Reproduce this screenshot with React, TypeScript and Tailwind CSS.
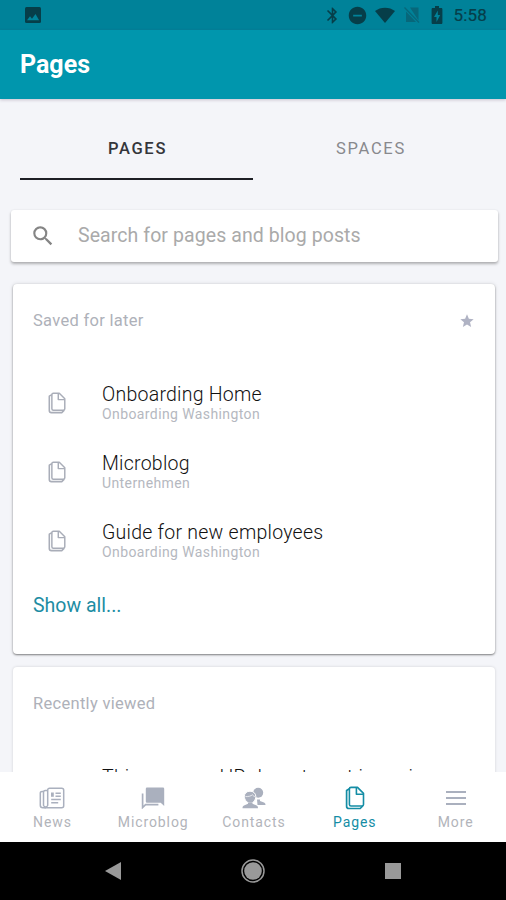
import React from 'react';
import { MdBluetooth, MdRemoveCircle, MdSearch, MdStar } from 'react-icons/md';

type SavedPage = { title: string; space: string };

const savedPages: SavedPage[] = [
  { title: 'Onboarding Home', space: 'Onboarding Washington' },
  { title: 'Microblog', space: 'Unternehmen' },
  { title: 'Guide for new employees', space: 'Onboarding Washington' },
];

const PagesIcon: React.FC<{ className?: string }> = ({ className }) => (
  <svg viewBox="0 0 20 24" className={className} fill="none" stroke="currentColor" strokeLinejoin="round">
    <path d="M6 1.4h6.5l6 6v11a1.6 1.6 0 0 1-1.6 1.6H6a1.6 1.6 0 0 1-1.6-1.6V3a1.6 1.6 0 0 1 1.6-1.6z" strokeWidth="1.6" />
    <path d="M11.4 2v6.3h6.8" strokeWidth="1.6" />
    <path d="M4.4 2.8 1.6 4.5v15.7a2.3 2.3 0 0 0 2.3 2.3h11.3l2.5-2.5" strokeWidth="1.7" />
  </svg>
);

const NewsIcon = () => (
  <svg viewBox="0 0 26 22" className="h-[22px] w-[26px]" fill="none" stroke="currentColor" strokeWidth="1.5">
    <path d="M10.5 1.2h12.2a2 2 0 0 1 2 2v15.6a2 2 0 0 1-2 2H5.5M10.5 1.2a1.8 1.8 0 0 0-1.8 1.8v15.4a2.2 2.2 0 0 1-4.2 0V5.2a1.8 1.8 0 0 1 1.8-1.8h2.4" />
    <path d="M4.5 4.4H3a1.7 1.7 0 0 0-1.7 1.7v12.2a2.5 2.5 0 0 0 2.5 2.5h3" />
    <path d="M16.5 6.2h5.3M16.5 9.2h5.3M12.2 12.4h9.6M12.2 15.8h7" />
    <path d="M12 5.5h2.8v4.3H12z" fill="currentColor" stroke="none" />
  </svg>
);

const MicroblogIcon = () => (
  <svg viewBox="0 0 24 22" className="h-[22px] w-6" fill="currentColor">
    <path d="M6 .5h16a1.2 1.2 0 0 1 1.2 1.2V19l-3.5-3.3H6a1.2 1.2 0 0 1-1.2-1.2V1.7A1.2 1.2 0 0 1 6 .5z" />
    <path d="M1.6 6.5v14l3-2.8h12.8" fill="none" stroke="currentColor" strokeWidth="1.7" />
  </svg>
);

const ContactsIcon = () => (
  <svg viewBox="0 0 24 22" className="h-[22px] w-6" fill="currentColor">
    <circle cx="16.2" cy="5.8" r="5" />
    <path d="M15 12.4h3v1.7l4 1.5c1.1.5 1.5 1.2 1.5 2.3h-8z" />
    <path d="M8 4.2c3.5 0 5.8 2.2 5.8 5.2 0 3.6-2.4 6.7-5.6 6.7S2.4 13 2.4 9.4C2.4 6.4 4.6 4.2 8 4.2z" stroke="#fff" />
    <path d="M3.4 9.6c3.2.1 5.4-.5 7-1.8.8 1 1.6 1.5 2.5 1.8" fill="none" stroke="#fff" strokeWidth=".7" />
    <path d="M6 15.5h4.5v1.2l4.1 1.7c1.1.5 1.4 1.3 1.4 2.8H.5c0-1.5.4-2.3 1.5-2.8L6 16.7z" />
  </svg>
);

const MenuIcon = () => (
  <svg viewBox="0 0 22 22" className="size-[22px]" stroke="currentColor" strokeWidth="2">
    <path d="M1 5h20M1 11h20M1 17h20" />
  </svg>
);

const StatusBar = () => (
  <div className="flex h-[30px] shrink-0 items-center justify-between bg-[#008299] pl-[25px] pr-[19px] text-[#063e49]">
    <svg viewBox="0 0 16 16" className="size-4">
      <rect width="16" height="16" rx="1.5" fill="currentColor" />
      <path d="M2 13.2 5 9.3l2 2.4L10.5 7l3.6 6.2z" fill="#008299" />
    </svg>
    <div className="flex items-center">
      <MdBluetooth className="mr-[5px] size-[19px]" />
      <MdRemoveCircle className="mr-[6px] size-[21px]" />
      <svg viewBox="0 0 22 18" className="mr-[8px] h-[18px] w-[22px]" fill="currentColor">
        <path d="M11 17 1 5C6.5.5 15.5.5 21 5z" />
      </svg>
      <svg viewBox="0 0 16 18" className="mr-[11px] h-[18px] w-4">
        <path d="M6 1.5h8.500v13zM2 5.500 12 16H2z" fill="#07677a" />
        <path d="M.5 1.5 15 16.5" stroke="#07677a" strokeWidth="1.3" />
      </svg>
      <svg viewBox="0 0 12 18" className="mr-[10px] h-[18px] w-3">
        <path d="M4 0h4v2h2.2c.7 0 1.2.5 1.2 1.2v13.5c0 .7-.5 1.3-1.2 1.3H1.8C1.1 18 .6 17.4.6 16.7V3.200C.6 2.500 1.100 2 1.800 2H4z" fill="currentColor" />
        <path d="M6.8 4.5 3 11h2.500v5L9.200 9H6.800z" fill="#008299" />
      </svg>
      <span className="text-[17px] leading-none tracking-[0.2px] [-webkit-text-stroke:0.2px]">5:58</span>
    </div>
  </div>
);

const PageRow: React.FC<{ page: SavedPage }> = ({ page }) => (
  <div className="flex h-[69px] items-start pl-[34px]">
    <PagesIcon className="mt-[9px] h-[22px] w-[20px] text-[#a9adb8]" />
    <div className="ml-[35px]">
      <h3 className="whitespace-nowrap text-[19.5px] font-light leading-[23px] tracking-[0.25px] text-[#111]">{page.title}</h3>
      <p className="text-[14px] leading-4 tracking-[0.4px] text-[#b5b8c0]">{page.space}</p>
    </div>
  </div>
);

const NavItem: React.FC<{ label: string; active?: boolean; children: React.ReactNode }> = ({ label, active, children }) => (
  <button className={active ? 'flex w-[101px] flex-col items-center text-[#148da5]' : 'flex w-[101px] flex-col items-center text-[#aab0be]'}>
    <span className="flex h-6 items-center">{children}</span>
    <span className={active ? 'mt-0.5 text-[14px] leading-5 tracking-[0.9px]' : 'mt-0.5 text-[14px] leading-5 tracking-[0.9px] text-[#b2b4ba]'}>{label}</span>
  </button>
);

const App: React.FC = () => {
  return (
    <div className="flex h-[900px] w-[506px] flex-col overflow-hidden bg-[#f4f5f9] font-['Roboto',sans-serif]">
      <StatusBar />
      <header className="flex h-[69px] shrink-0 items-center bg-[#0096ad] pl-5 shadow-[0_1px_3px_rgba(70,40,80,0.25)]">
        <h1 className="text-[25px] font-bold leading-none text-white">Pages</h1>
      </header>

      <main className="min-h-0 flex-1 overflow-hidden">
        <div className="mx-5 mb-[30px] flex h-[81px] pt-[22px] text-[16.5px] font-medium tracking-[1.7px]">
          <button className="flex w-[234px] items-center justify-center border-b-2 border-[#1d1f25] pl-0.5 text-[#34363b]">PAGES</button>
          <button className="flex w-[234px] items-center justify-center border-b-2 border-transparent pl-[3px] font-normal text-[#88898d]">SPACES</button>
        </div>

        <div className="ml-[11px] mr-2 flex h-[52px] items-center rounded-[3px] bg-white pl-[19px] shadow-[0_2px_3px_rgba(0,0,0,0.28),0_0_2px_rgba(0,0,0,0.08)]">
          <MdSearch className="size-[26px] text-[#858585]" />
          <span className="ml-[22px] text-[19.5px] tracking-[0.08px] text-[#aaa]">Search for pages and blog posts</span>
        </div>

        <section className="ml-[13px] mr-[11px] mt-[22px] h-[370px] rounded-[4px] bg-white pt-[27px] shadow-[0_1px_2px_rgba(0,0,0,0.45),0_0_4px_rgba(0,0,0,0.12)]">
          <div className="mb-[52px] flex h-5 items-center justify-between px-5">
            <h2 className="text-[16.5px] tracking-[0.3px] text-[#aeb1b9]">Saved for later</h2>
            <MdStar className="size-4 text-[#b0b3c4]" />
          </div>
          {savedPages.map((page) => (
            <PageRow key={page.title} page={page} />
          ))}
          <a className="ml-5 mt-1 block text-[19.5px] leading-6 text-[#1d8da3]">Show all...</a>
        </section>

        <section className="ml-[13px] mr-[11px] mt-[13px] h-[370px] rounded-[4px] bg-white pt-[27px] shadow-[0_0_3px_rgba(0,0,0,0.15)]">
          <div className="mb-[52px] flex h-5 items-center pl-5">
            <h2 className="text-[16.5px] tracking-[0.3px] text-[#aeb1b9]">Recently viewed</h2>
          </div>
          <PageRow page={{ title: 'This was our HR department is saving', space: 'Onboarding Washington' }} />
        </section>
      </main>

      <nav className="flex h-[70px] shrink-0 justify-center bg-white pl-[2px] pt-[14px]">
        <NavItem label="News"><NewsIcon /></NavItem>
        <NavItem label="Microblog"><MicroblogIcon /></NavItem>
        <NavItem label="Contacts"><ContactsIcon /></NavItem>
        <NavItem label="Pages" active><PagesIcon className="h-6 w-5" /></NavItem>
        <NavItem label="More"><MenuIcon /></NavItem>
      </nav>

      {/* system buttons */}
      <div className="flex h-[58px] shrink-0 items-center justify-between bg-black px-[105px]">
        <svg viewBox="0 0 16 18" className="h-[18px] w-4"><path d="M16 0v18L0 9z" fill="#999" /></svg>
        <svg viewBox="0 0 24 24" className="size-6">
          <circle cx="12" cy="12" r="11" fill="none" stroke="#999" strokeWidth="1.5" />
          <circle cx="12" cy="12" r="8.8" fill="#999" />
        </svg>
        <div className="size-4 bg-[#999]"></div>
      </div>
    </div>
  );
};

export default App;
